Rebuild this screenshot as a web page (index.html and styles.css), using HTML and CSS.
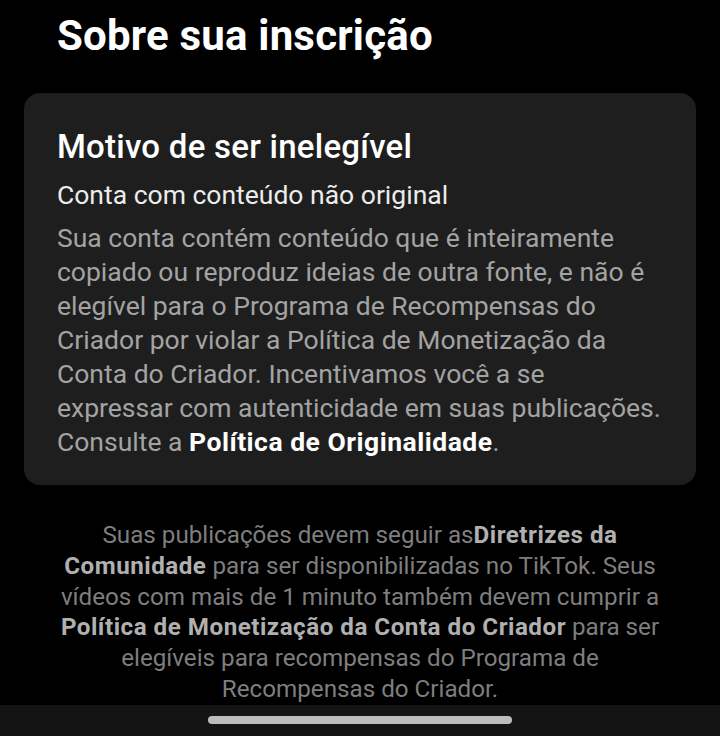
FILE: index.html
```html
<!DOCTYPE html>
<html lang="pt">
<head>
<meta charset="utf-8">
<link rel="stylesheet" href="styles.css">
</head>
<body>
<div class="screen">
  <h1 class="title">Sobre sua inscrição</h1>
  <section class="card">
    <h2 class="card-title">Motivo de ser inelegível</h2>
    <p class="reason">Conta com conteúdo não original</p>
    <p class="body">Sua conta contém conteúdo que é inteiramente copiado ou reproduz ideias de outra fonte, e não é elegível para o Programa de Recompensas do Criador por violar a Política de Monetização da Conta do Criador. Incentivamos você a se expressar com autenticidade em suas publicações. Consulte a <b class="link">Política de Originalidade</b>.</p>
  </section>
  <p class="footer">Suas publicações devem seguir as<b>Diretrizes da Comunidade</b> para ser disponibilizadas no TikTok. Seus vídeos com mais de 1 minuto também devem cumprir a <b>Política de Monetização da Conta do Criador</b> para ser elegíveis para recompensas do Programa de Recompensas do Criador.</p>
  <div class="navbar"><div class="pill"></div></div>
</div>
</body>
</html>
```
FILE: styles.css
```css
html, body { margin: 0; padding: 0; background: #000; }
body { font-family: Roboto, "Noto Sans", sans-serif; color: #fff; }
.screen { width: 720px; height: 736px; display: flex; flex-direction: column; overflow: hidden; }
.title { margin: 11px 0 0 57px; font-size: 42px; font-weight: 700; line-height: 50px; letter-spacing: 0.2px; color: #fff; }
.card { margin: 32px 24px 0 24px; background: #1e1e1e; border-radius: 16px; padding: 34px 33px 26px 33px; }
.card-title { margin: 0; font-size: 33px; font-weight: 500; line-height: 40px; letter-spacing: 0.25px; color: #fff; }
.reason { margin: 11px 0 0 0; font-size: 26.5px; line-height: 34px; color: #ececec; }
.body { margin: 9px 0 0 0; font-size: 26.5px; line-height: 34px; color: #a3a3a3; }
.link { color: #fff; font-weight: 700; letter-spacing: 0.5px; }
.footer { margin: 35px 54px 0 54px; text-align: center; font-size: 24.2px; line-height: 30.8px; color: #7e7e7e; }
.footer b { color: #b0b0b0; font-weight: 700; letter-spacing: 0.5px; }
.navbar { margin-top: auto; height: 32px; background: #141414; display: flex; justify-content: center; padding-top: 11px; box-sizing: border-box; flex: none; }
.pill { width: 304px; height: 8px; border-radius: 4px; background: #bcbcbc; }
```
